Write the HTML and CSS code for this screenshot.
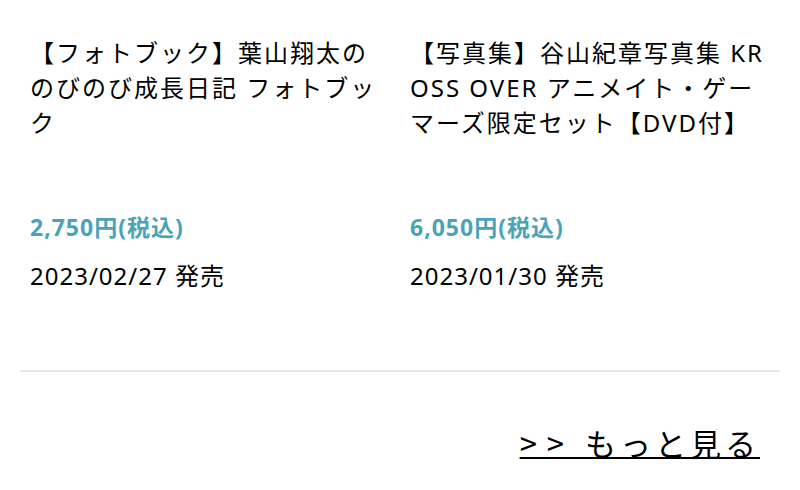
FILE: index.html
```html
<!DOCTYPE html>
<html lang="ja">
  <head>
    <meta charset="UTF-8" />
    <meta name="viewport" content="width=device-width, initial-scale=1.0" />
    <title>新着商品</title>
    <link rel="stylesheet" href="styles.css">
  </head>
  <body>
    <div class="container">
      <div class="product-list">
        <div class="product">
          <p class="product-title">【フォトブック】葉山翔太ののびのび成長日記 フォトブック</p>
          <p class="price">2,750円(税込)</p>
          <p class="release">2023/02/27 発売</p>
        </div>
        <div class="product">
          <p class="product-title">【写真集】谷山紀章写真集 KROSS OVER アニメイト・ゲーマーズ限定セット【DVD付】</p>
          <p class="price">6,050円(税込)</p>
          <p class="release">2023/01/30 発売</p>
        </div>
      </div>
      <div class="more">
        <a href="#"><span class="arrows">&gt;&gt;</span> もっと見る</a>
      </div>
    </div>
  </body>
</html>
```

FILE: styles.css
```css
body {
  font-family: "Noto Sans", "Noto Sans CJK JP", sans-serif;
  background-color: #fff;
  color: #000;
  margin: 0;
  padding: 0;
}
.container {
  margin: 0 20px;
  padding-top: 35px;
}
.product-list {
  display: grid;
  grid-template-columns: 1fr 1fr;
  border-bottom: 2px solid #e8e8e8;
  padding-bottom: 77px;
}
.product {
  padding: 0 10px;
}
.product p {
  margin: 0;
}
.product-title {
  font-size: 24px;
  line-height: 35px;
  letter-spacing: 2px;
  word-break: break-all;
  height: 175px;
  overflow: hidden;
}
.price {
  color: #4aa3b8;
  font-size: 23px;
  font-weight: bold;
  letter-spacing: 1px;
  line-height: 35px;
}
.release {
  font-size: 24px;
  letter-spacing: 1px;
  line-height: 35px;
  margin-top: 13px !important;
}
.more {
  text-align: right;
  padding: 48px 20px 0;
}
.more a {
  color: #000;
  font-family: "Noto Sans CJK JP", sans-serif;
  font-size: 31px;
  letter-spacing: 4px;
  text-decoration-thickness: 2px;
}
.more .arrows {
  letter-spacing: 10px;
}
```
